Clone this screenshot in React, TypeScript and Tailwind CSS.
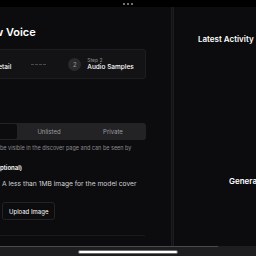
export default function App() {
  return (
    <div className="w-[256px] h-[256px] overflow-hidden bg-black flex flex-col font-['Inter',sans-serif]">
      <div className="h-[7px] shrink-0 flex items-center justify-center gap-[2px]">
        <span className="w-[2px] h-[2px] rounded-full bg-[#9a9a9a]" />
        <span className="w-[2px] h-[2px] rounded-full bg-[#9a9a9a]" />
        <span className="w-[2px] h-[2px] rounded-full bg-[#9a9a9a]" />
      </div>

      <div className="flex flex-1 min-h-0 bg-[#0c0c0e]">
        <div className="w-[171px] shrink-0 overflow-hidden">
          <div className="ml-[-48px] w-[194px] pt-[18px]">
            <h1 className="ml-[-11px] text-[11px] leading-[14px] font-semibold text-white whitespace-nowrap">
              Create New Voice
            </h1>

            <div className="mt-[10px] h-[30px] rounded-[3px] border border-[#1d1d20] bg-[#131315] flex items-center px-[3px]">
              <div className="flex items-center gap-[6px]">
                <div className="w-[13px] h-[13px] rounded-full bg-[#2a2a2d] flex items-center justify-center text-[6px] text-[#9a9a9a]">1</div>
                <div className="flex flex-col">
                  <span className="text-[5px] leading-[6px] text-[#8a8a8a]">Step 1</span>
                  <span className="text-[6.5px] leading-[8px] font-medium text-white whitespace-nowrap">Basic Detail</span>
                </div>
              </div>
              <div className="ml-[20px] w-[15px] border-t border-dashed border-[#4a4a4d]" />
              <div className="ml-[22px] flex items-center gap-[6px]">
                <div className="w-[13px] h-[13px] rounded-full bg-[#2a2a2d] flex items-center justify-center text-[6px] text-[#9a9a9a]">2</div>
                <div className="flex flex-col">
                  <span className="text-[5px] leading-[6px] text-[#8a8a8a]">Step 2</span>
                  <span className="text-[6.5px] leading-[8px] font-medium text-white whitespace-nowrap">Audio Samples</span>
                </div>
              </div>
            </div>

            <div className="mt-[44px] h-[17px] rounded-[3px] bg-[#232326] p-[1px] flex text-[6px] text-[#9c9c9f]">
              <div className="flex-1 rounded-[2px] bg-[#0c0c0e] flex items-center justify-center text-white">Public</div>
              <div className="flex-1 flex items-center justify-center">Unlisted</div>
              <div className="flex-1 flex items-center justify-center">Private</div>
            </div>

            <p className="mt-[5px] text-[5.5px] leading-[7px] text-[#8a8a8d] whitespace-nowrap">
              Public models will be visible in the discover page and can be seen by
            </p>

            <p className="mt-[12px] ml-[3px] text-[6px] leading-[8px] font-semibold text-white whitespace-nowrap">
              Cover Image (Optional)
            </p>

            <div className="mt-[7px] flex gap-[2px]">
              <div className="w-[48px] h-[40px] shrink-0 rounded-[3px] bg-[#161618]" />
              <div className="flex flex-col items-start">
                <p className="text-[6.7px] leading-[10px] text-[#d0d0d2] whitespace-nowrap">
                  A less than 1MB image for the model cover
                </p>
                <button className="mt-[13px] h-[18px] px-[6px] rounded-[3px] border border-[#232326] text-[6px] text-white">
                  Upload Image
                </button>
              </div>
            </div>

            <div className="mt-[15px] w-[145px] ml-[48px] h-px bg-[#1a1a1c]" />
          </div>
        </div>

        <div className="w-[3px] shrink-0 bg-[#141417] border-x border-[#1c1c1f]" />

        <div className="flex-1 flex flex-col">
          <h2 className="mt-[26px] pl-[24px] text-[8px] leading-[12px] font-semibold text-white whitespace-nowrap">
            Latest Activity
          </h2>
          <p className="mt-[130px] pl-[55px] text-[8px] leading-[12px] font-semibold text-white whitespace-nowrap">
            Generate your first voice
          </p>
        </div>
      </div>

      <div className="h-[10px] shrink-0 bg-[#1e1e20] flex flex-col">
        <div className="w-[218px] h-px bg-[#4a4a4d]" />
        <div className="flex-1 flex items-center justify-center">
          <div className="w-[100px] h-[4px] rounded-full bg-white border border-[#6a6a6a]" />
        </div>
      </div>
    </div>
  );
}
